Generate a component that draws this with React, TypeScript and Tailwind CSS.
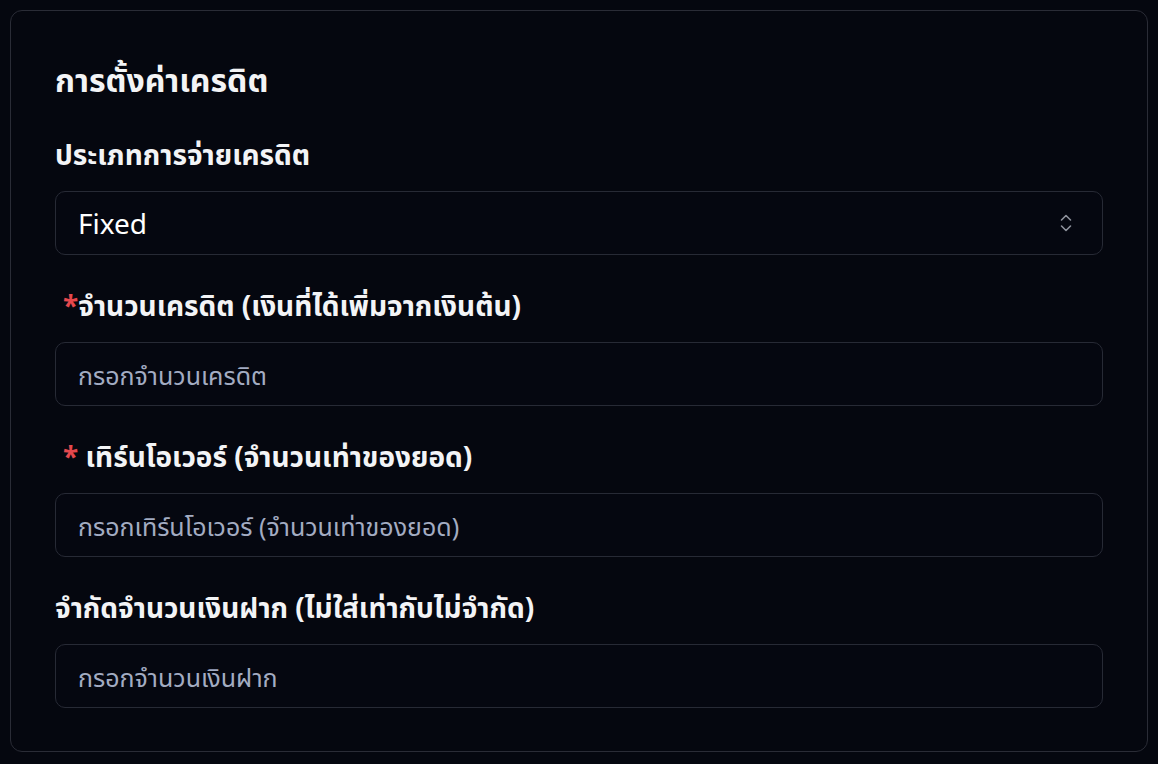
import React from "react";

const font = { fontFamily: '"Noto Sans Thai", "Noto Sans", "Liberation Sans", sans-serif' };

function Field({ label, required, spaced, placeholder }: { label: string; required?: boolean; spaced?: boolean; placeholder: string }) {
  return (
    <div className="flex flex-col gap-[16px]">
      <label className={`text-[28px] font-bold leading-[36px] text-[#f3f4f6] ${required ? "pl-[8px]" : ""}`}>
        {required && <span className="text-[#e5484d]">*</span>}
        {spaced ? " " : ""}
        {label}
      </label>
      <input
        placeholder={placeholder}
        className="h-[64px] w-full rounded-[10px] border border-[#272a35] bg-[#050710] px-[22px] pt-[6px] text-[25px] text-white outline-none placeholder:text-[#a3acc2]"
        style={font}
      />
    </div>
  );
}

export default function App() {
  return (
    <div className="min-h-[764px] w-full bg-[#05070f] p-[10px]" style={font}>
      <div className="flex flex-col rounded-[12px] border border-[#2a2c36] bg-[#05070f] px-[44px] pb-[43px] pt-[51px]">
        <h2 className="text-[32px] font-bold leading-[40px] text-[#f3f4f6]">การตั้งค่าเครดิต</h2>
        <div className="mt-[37px] flex flex-col gap-[35px]">
          <div className="flex flex-col gap-[16px]">
            <label className="text-[28px] font-bold leading-[36px] text-[#f3f4f6]">ประเภทการจ่ายเครดิต</label>
            <div className="flex h-[64px] items-center justify-between rounded-[10px] border border-[#272a35] bg-[#050710] pl-[22px] pr-[30px]">
              <span className="mt-[6px] text-[28px] text-white">Fixed</span>
              <svg width="12" height="18" viewBox="0 0 12 18" fill="none" stroke="#8e929c" strokeWidth="1.6" strokeLinecap="round" strokeLinejoin="round">
                <path d="M1.5 6 L6 1.5 L10.5 6" />
                <path d="M1.5 12 L6 16.5 L10.5 12" />
              </svg>
            </div>
          </div>
          <Field label="จำนวนเครดิต (เงินที่ได้เพิ่มจากเงินต้น)" required placeholder="กรอกจำนวนเครดิต" />
          <Field label="เทิร์นโอเวอร์ (จำนวนเท่าของยอด)" required spaced placeholder="กรอกเทิร์นโอเวอร์ (จำนวนเท่าของยอด)" />
          <Field label="จำกัดจำนวนเงินฝาก (ไม่ใส่เท่ากับไม่จำกัด)" placeholder="กรอกจำนวนเงินฝาก" />
        </div>
      </div>
    </div>
  );
}
